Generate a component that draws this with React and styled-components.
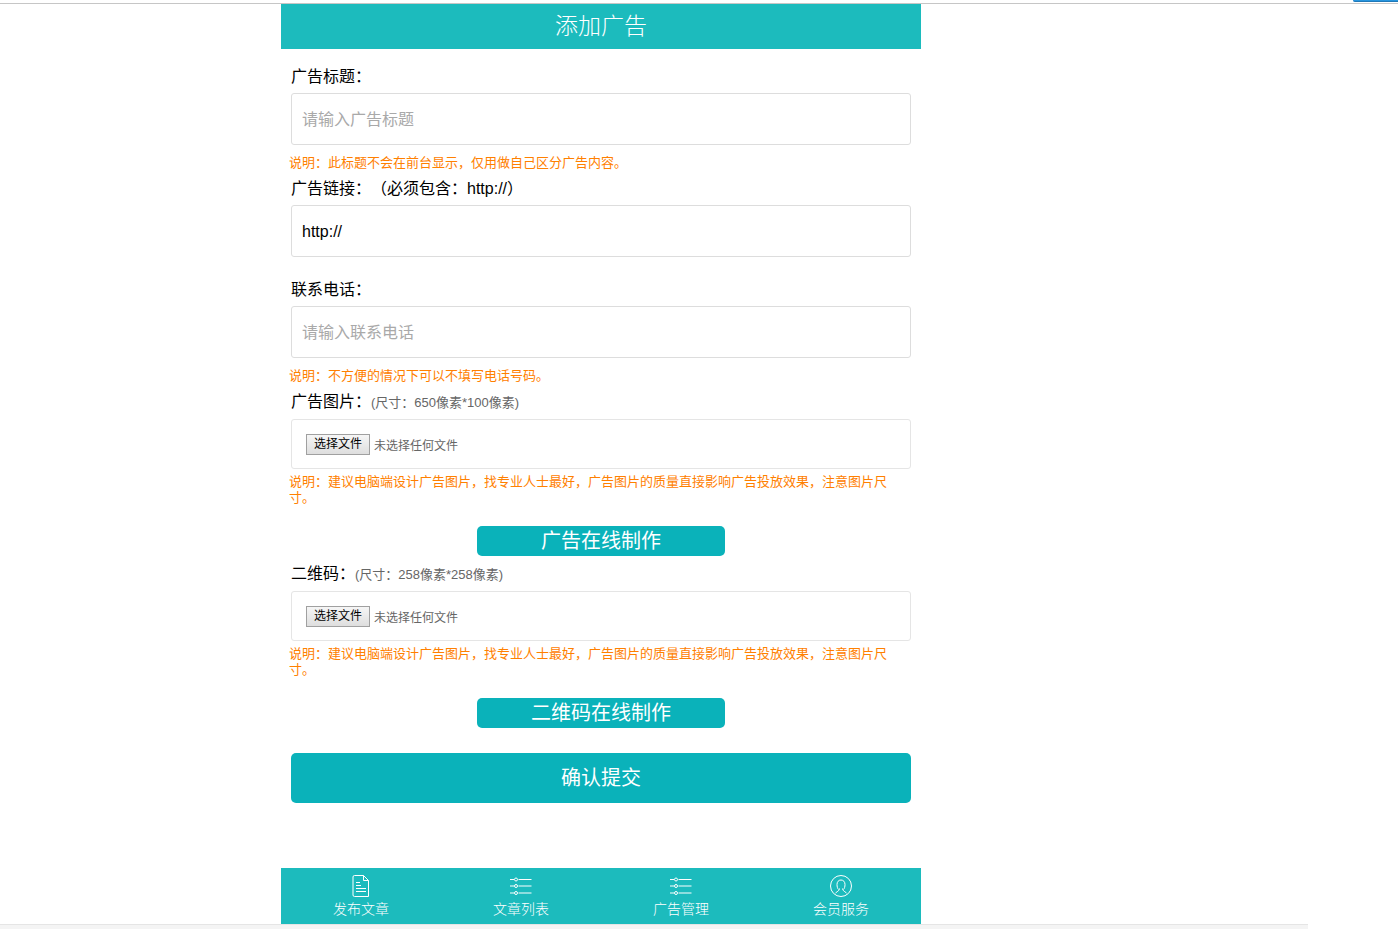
import React, { useState } from 'react';
import styled, { createGlobalStyle } from 'styled-components';

const GlobalStyle = createGlobalStyle`
	body {
		background: #fff;
		color: #000;
		font-family: "Liberation Sans", "Noto Sans CJK SC", sans-serif;
		font-size: 16px;
		margin: 0;
		text-spacing-trim: space-all;
	}

	button,
	input {
		font-family: inherit;
	}
`;

const TopStrip = styled.div`
	border-bottom: 1px solid #c6c6c6;
	display: flex;
	height: 3px;
	justify-content: flex-end;
`;

const TopTab = styled.div`
	background: #2795de;
	border-bottom: 1px solid #1f78b8;
	border-bottom-left-radius: 3px;
	box-sizing: border-box;
	height: 2px;
	width: 45px;
`;

const Page = styled.div`
	padding-right: 196px;
`;

const Container = styled.main`
	margin: 0 auto;
	max-width: 640px;
`;

const Header = styled.h1`
	background: #1cbbbd;
	color: #fff;
	font-size: 23px;
	font-weight: 300;
	line-height: 45px;
	margin: 0;
	text-align: center;
`;

const AdForm = styled.form`
	display: flex;
	flex-direction: column;
	padding: 10px 10px 65px;
`;

const Field = styled.div`
	margin-bottom: ${props => (props.$spaced ? '15px' : '0')};
`;

const Label = styled.label`
	display: block;
	line-height: 24px;
	margin: 6px 0 4px;
`;

const SizeHint = styled.span`
	color: #666;
	font-size: 13px;
	line-height: 16px;
`;

const TextInput = styled.input`
	background: #fff;
	border: 1px solid #ddd;
	border-radius: 3px;
	box-sizing: border-box;
	color: #000;
	display: block;
	font-size: 16px;
	height: 52px;
	outline: none;
	padding: 2px 10px 0;
	width: 100%;

	&::placeholder {
		color: #a9a9a9;
	}
`;

const Note = styled.p`
	color: #ff8000;
	font-size: 13px;
	line-height: 16px;
	margin: ${props => (props.$tight ? '5px' : '10px')} 14px 0 -2px;
`;

const FileBox = styled.div`
	align-items: center;
	border: 1px solid #e5e5e5;
	border-radius: 3px;
	box-sizing: border-box;
	display: flex;
	gap: 4px;
	height: 50px;
	margin-top: 5px;
	padding: 0 14px;
	position: relative;

	input {
		cursor: pointer;
		inset: 0;
		opacity: 0;
		position: absolute;
		width: 100%;
	}
`;

const FileButton = styled.span`
	background: linear-gradient(#f6f6f6, #dedede);
	border: 1px solid #a0a0a0;
	box-sizing: border-box;
	font-size: 12px;
	line-height: 19px;
	padding: 0 7px;
`;

const FileName = styled.span`
	color: #666;
	font-size: 12px;
`;

const MakeButton = styled.button`
	align-self: center;
	background: #0ab2ba;
	border: none;
	border-radius: 5px;
	color: #fff;
	font-size: 20px;
	line-height: 30px;
	margin-top: 20px;
	padding: 0;
	width: 40%;
`;

const SubmitButton = styled.button`
	background: #0ab2ba;
	border: none;
	border-radius: 5px;
	color: #fff;
	font-size: 20px;
	line-height: 50px;
	margin-top: 25px;
	padding: 0;
`;

const TabBar = styled.nav`
	background: #1cbbbd;
	display: grid;
	grid-template-columns: repeat(4, 1fr);
	height: 56px;
`;

const Tab = styled.a`
	align-items: center;
	color: #fff;
	display: flex;
	flex-direction: column;
	font-size: 14px;
	font-weight: 300;
	line-height: 22px;
	padding-top: 6px;
	text-decoration: none;

	svg {
		fill: none;
		height: 24px;
		stroke: #fff;
		width: 24px;
	}
`;

const BottomStrip = styled.div`
	background: #f4f4f4;
	border-top: 1px solid #e5e5e5;
	height: 4px;
	margin-right: 90px;
`;

const DocIcon = () => (
	<svg viewBox="0 0 24 24" aria-hidden="true">
		<path d="M14.5 1.5H5.5a1.500 1.500 0 0 0-1.500 1.500v18a1.500 1.500 0 0 0 1.500 1.500h14v-16zM14.5 1.5v5h5M7 8.5h4M7 11.5h5M7 14.5h10M7 17.5h10" />
	</svg>
);

const ListIcon = () => (
	<svg viewBox="0 0 24 24" aria-hidden="true">
		<path d="M1 5.500h4M9.500 5.500h13M1 12h4M9.500 12h13M1 19h4M9.500 19h13" />
		<circle cx="7" cy="5.500" r="1.500" />
		<circle cx="7" cy="12" r="1.500" />
		<circle cx="7" cy="19" r="1.500" />
	</svg>
);

const UserIcon = () => (
	<svg viewBox="0 0 24 24" aria-hidden="true">
		<circle cx="12" cy="12" r="10.5" />
		<path d="M9.500 15.500C8.500 14.500 8 12.500 8 10.500 8 7.800 9.600 6 12 6s4 1.800 4 4.500c0 2-.5 4-1.500 5M10.500 14.500c0 2-1.500 2.500-4 4.500M13.500 14.500c0 2 1.500 2.500 4 4.500" />
	</svg>
);

const tabs = [
	{ text: '发布文章', icon: <DocIcon /> },
	{ text: '文章列表', icon: <ListIcon /> },
	{ text: '广告管理', icon: <ListIcon /> },
	{ text: '会员服务', icon: <UserIcon /> },
];

const imageNote = '说明：建议电脑端设计广告图片，找专业人士最好，广告图片的质量直接影响广告投放效果，注意图片尺寸。';

const FileField = ({ id, label, size }) => {
	const [name, setName] = useState('未选择任何文件');

	return (
		<Field>
			<Label htmlFor={id}>{label}<SizeHint>(尺寸：{size})</SizeHint></Label>
			<FileBox>
				<FileButton>选择文件</FileButton>
				<FileName>{name}</FileName>
				<input
					id={id}
					type="file"
					accept="image/*"
					onChange={event => setName(event.target.files.length ? event.target.files[0].name : '未选择任何文件')}
				/>
			</FileBox>
			<Note $tight>{imageNote}</Note>
		</Field>
	);
};

const App = () => {
	const [link, setLink] = useState('http://');

	return (
		<>
			<GlobalStyle />
			<TopStrip><TopTab /></TopStrip>
			<Page>
				<Container>
					<Header>添加广告</Header>
					<AdForm onSubmit={event => event.preventDefault()}>
						<Field>
							<Label htmlFor="title">广告标题：</Label>
							<TextInput id="title" type="text" placeholder="请输入广告标题" />
							<Note>说明：此标题不会在前台显示，仅用做自己区分广告内容。</Note>
						</Field>
						<Field $spaced>
							<Label htmlFor="link">广告链接：（必须包含：http://）</Label>
							<TextInput id="link" type="text" value={link} onChange={event => setLink(event.target.value)} />
						</Field>
						<Field>
							<Label htmlFor="phone">联系电话：</Label>
							<TextInput id="phone" type="tel" placeholder="请输入联系电话" />
							<Note>说明：不方便的情况下可以不填写电话号码。</Note>
						</Field>
						<FileField id="image" label="广告图片：" size="650像素*100像素" />
						<MakeButton type="button">广告在线制作</MakeButton>
						<FileField id="qrcode" label="二维码：" size="258像素*258像素" />
						<MakeButton type="button">二维码在线制作</MakeButton>
						<SubmitButton type="submit">确认提交</SubmitButton>
					</AdForm>
					<TabBar>
						{tabs.map(tab => (
							<Tab key={tab.text} href="#">{tab.icon}{tab.text}</Tab>
						))}
					</TabBar>
				</Container>
			</Page>
			<BottomStrip />
		</>
	);
};

export default App;
